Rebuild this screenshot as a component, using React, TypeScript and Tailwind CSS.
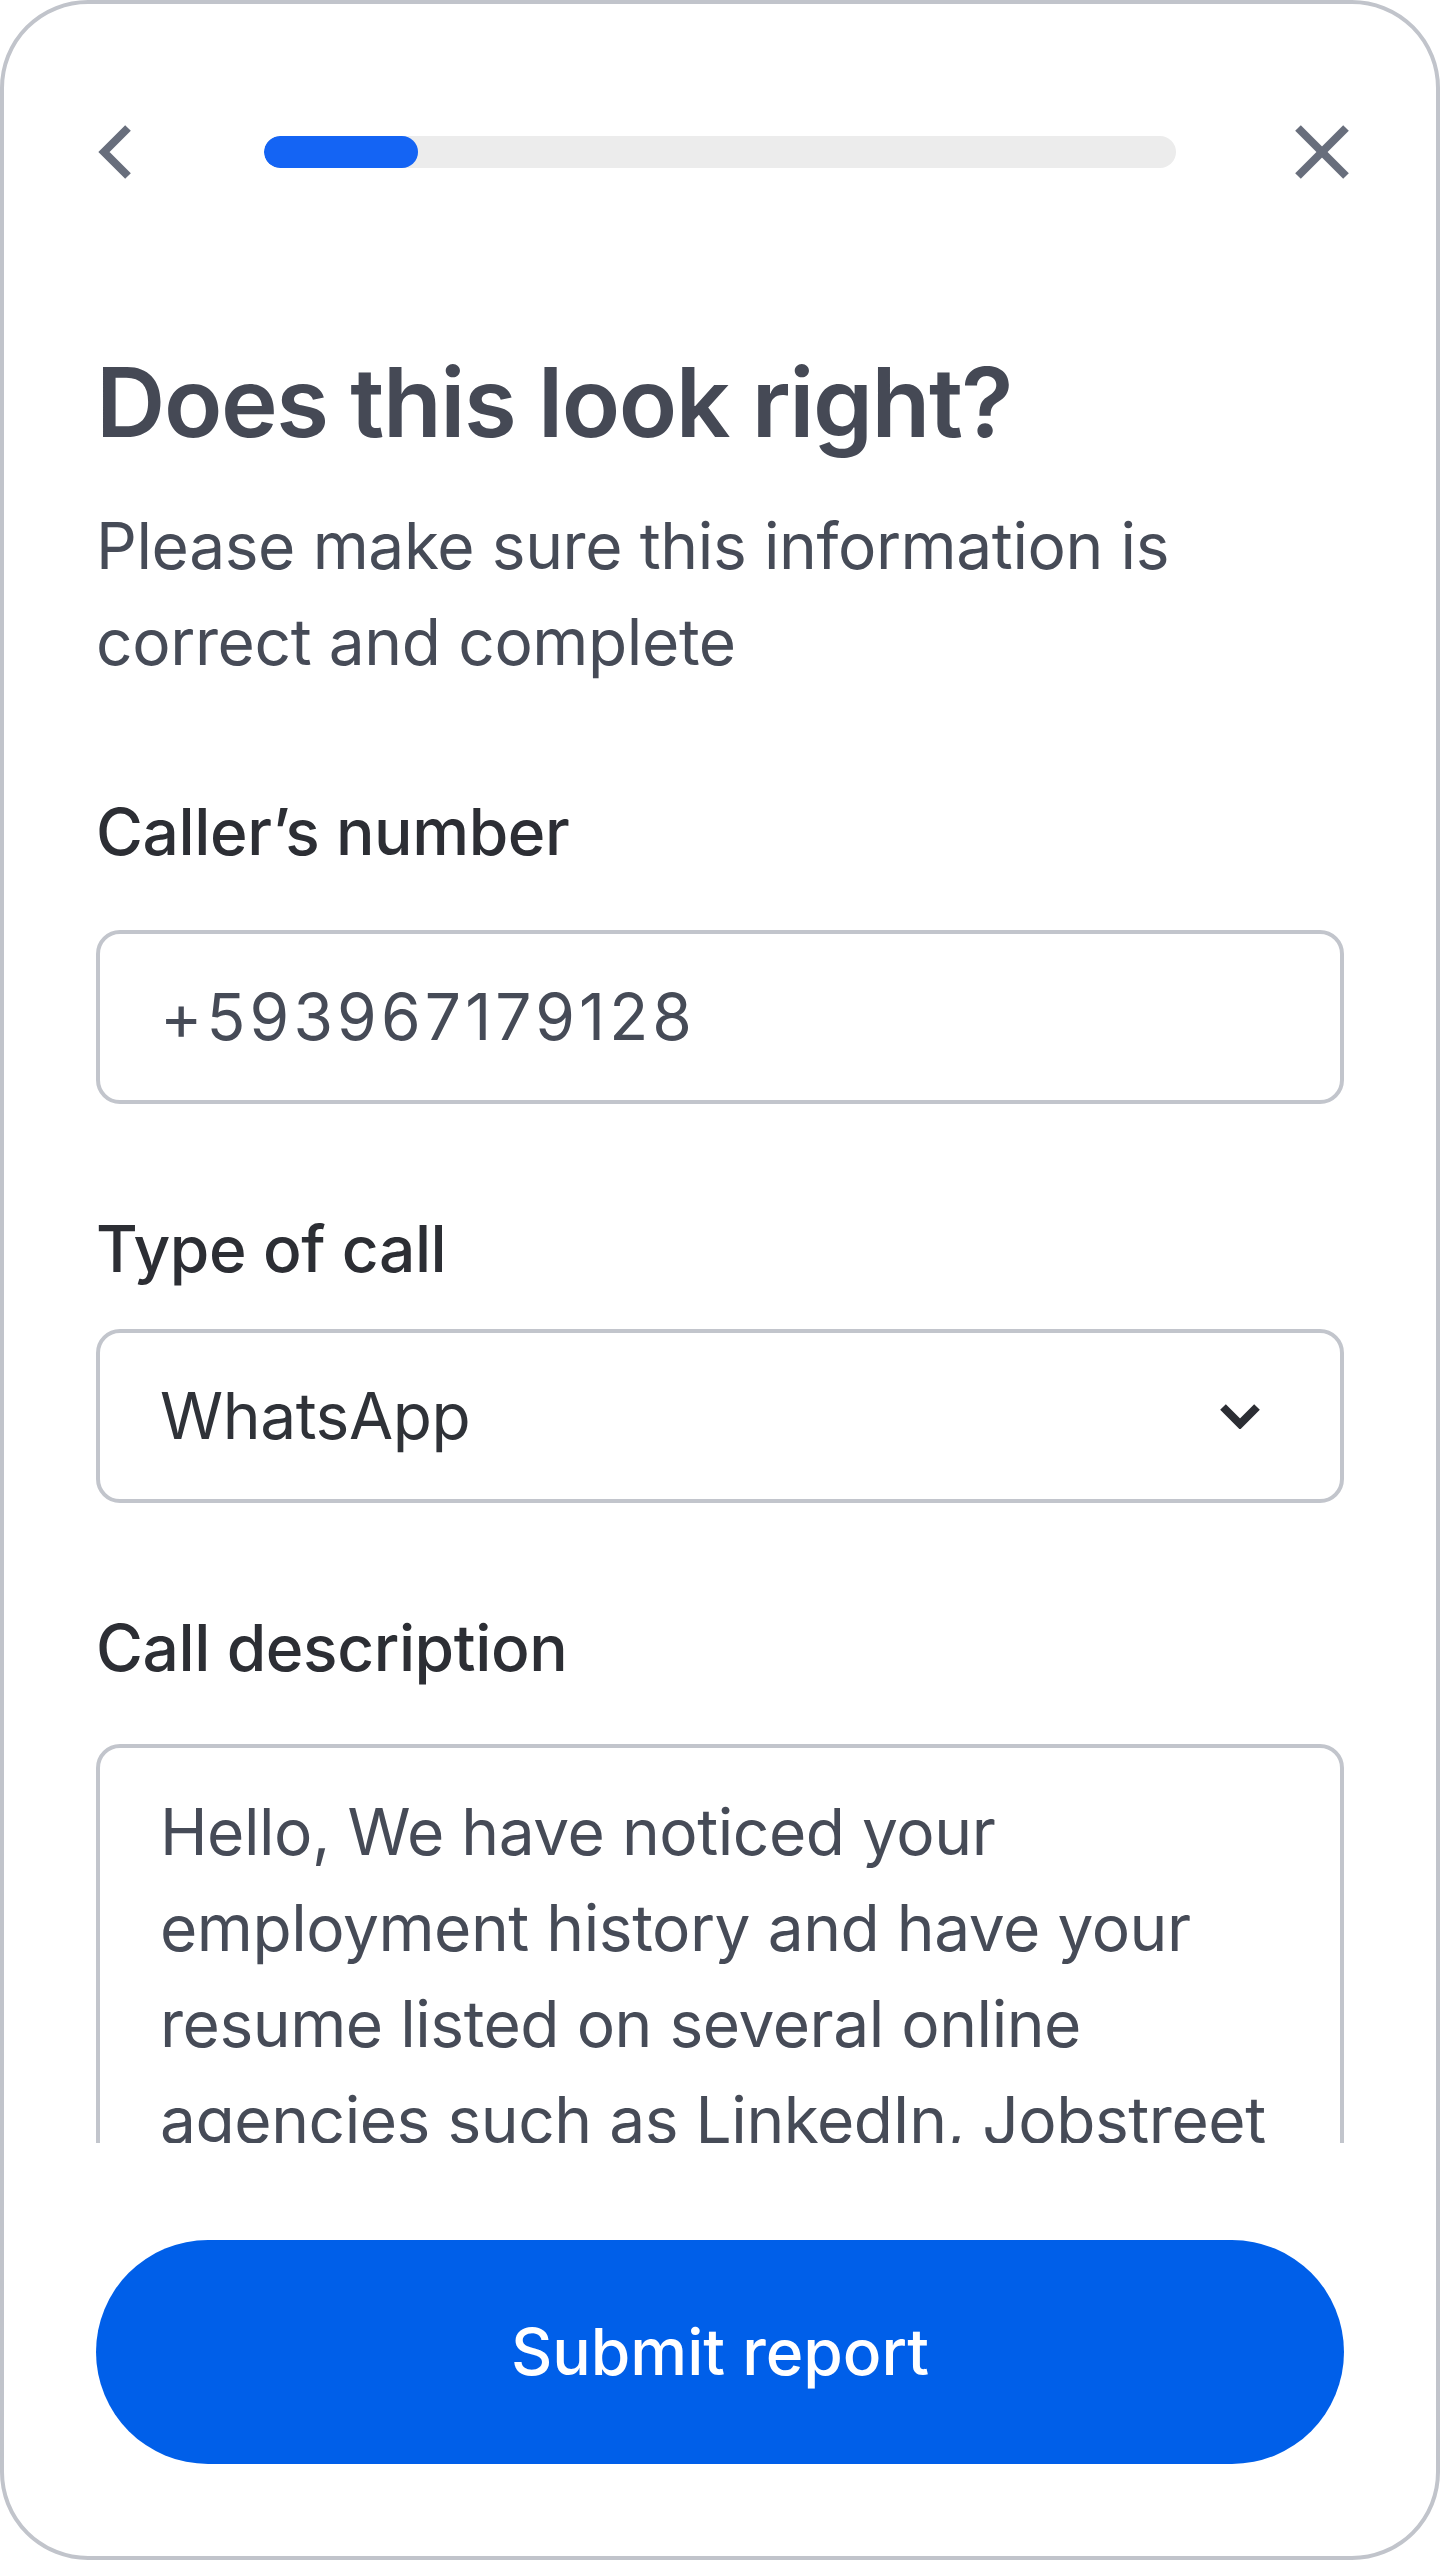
import React from "react";

function BackIcon() {
  return (
    <svg width="36" height="56" viewBox="0 0 36 56" fill="none">
      <polyline points="32,4 8,28 32,52" stroke="#686e7c" strokeWidth="8" strokeLinecap="butt" strokeLinejoin="miter" />
    </svg>
  );
}

function CloseIcon() {
  return (
    <svg width="56" height="56" viewBox="0 0 56 56" fill="none">
      <line x1="4" y1="4" x2="52" y2="52" stroke="#686e7c" strokeWidth="8" />
      <line x1="52" y1="4" x2="4" y2="52" stroke="#686e7c" strokeWidth="8" />
    </svg>
  );
}

function ChevronDown() {
  return (
    <svg width="40" height="26" viewBox="0 0 40 26" fill="none">
      <polyline points="3,4 20,21 37,4" stroke="#2b2d33" strokeWidth="8" />
    </svg>
  );
}

export default function App() {
  const font = { fontFamily: "Inter, 'Noto Sans', sans-serif" };
  return (
    <div className="w-[1440px] h-[2560px] bg-white" style={font}>
      <div className="w-full h-full border-[4px] border-[#c1c4cb] rounded-[88px] bg-white flex flex-col overflow-hidden">
        {/* Header */}
        <div className="mt-[100px] h-[96px] flex items-center pl-[92px] pr-[86px] shrink-0">
          <div className="w-[120px] flex items-center">
            <BackIcon />
          </div>
          <div className="flex-1 ml-[48px] mr-[54px] h-[32px] rounded-full bg-[#ececec] overflow-hidden">
            <div className="h-full w-[154px] rounded-full bg-[#1464f4]" />
          </div>
          <div className="w-[120px] flex items-center justify-end">
            <CloseIcon />
          </div>
        </div>

        {/* Scroll area */}
        <div className="h-[1943px] overflow-hidden shrink-0 px-[92px]">
          <h1 className="mt-[138px] text-[96px] leading-[128px] font-semibold text-[#454955] tracking-[-0.015em]">
            Does this look right?
          </h1>
          <p className="mt-[32px] text-[64px] leading-[96px] text-[#464b57] tracking-[-0.006em]">
            Please make sure this information is
            <br />
            correct and complete
          </p>

          <div className="mt-[94px] text-[64px] leading-[96px] font-medium text-[#2c2e34] tracking-[-0.006em]">
            Caller’s number
          </div>
          <div className="mt-[50px] h-[174px] border-[4px] border-[#c2c5cc] rounded-[24px] flex items-center pl-[60px] text-[64px] leading-[96px] text-[#464b57] tracking-[0.065em]">
            +593967179128
          </div>

          <div className="mt-[97px] text-[64px] leading-[96px] font-medium text-[#2c2e34] tracking-[-0.006em]">
            Type of call
          </div>
          <div className="mt-[32px] h-[174px] border-[4px] border-[#c2c5cc] rounded-[24px] flex items-center justify-between pl-[60px] pr-[80px] text-[64px] leading-[96px] text-[#2f3238] tracking-[-0.006em]">
            <span>WhatsApp</span>
            <ChevronDown />
          </div>

          <div className="mt-[97px] text-[64px] leading-[96px] font-medium text-[#2c2e34] tracking-[-0.006em]">
            Call description
          </div>
          <div className="mt-[48px] h-[600px] border-[4px] border-[#c2c5cc] rounded-[24px] pl-[60px] pr-[40px] pt-[36px] text-[64px] leading-[96px] text-[#464b57] whitespace-nowrap tracking-[-0.007em]">
            <div>Hello, We have noticed your</div>
            <div>employment history and have your</div>
            <div>resume listed on several online</div>
            <div>agencies such as LinkedIn, Jobstreet</div>
            <div>and Indeed.</div>
          </div>
        </div>

        {/* Bottom */}
        <div className="px-[92px] pt-[97px] shrink-0">
          <button className="w-full h-[224px] rounded-full bg-[#005fe9] text-white text-[64px] font-medium flex items-center justify-center">
            Submit report
          </button>
        </div>
      </div>
    </div>
  );
}
